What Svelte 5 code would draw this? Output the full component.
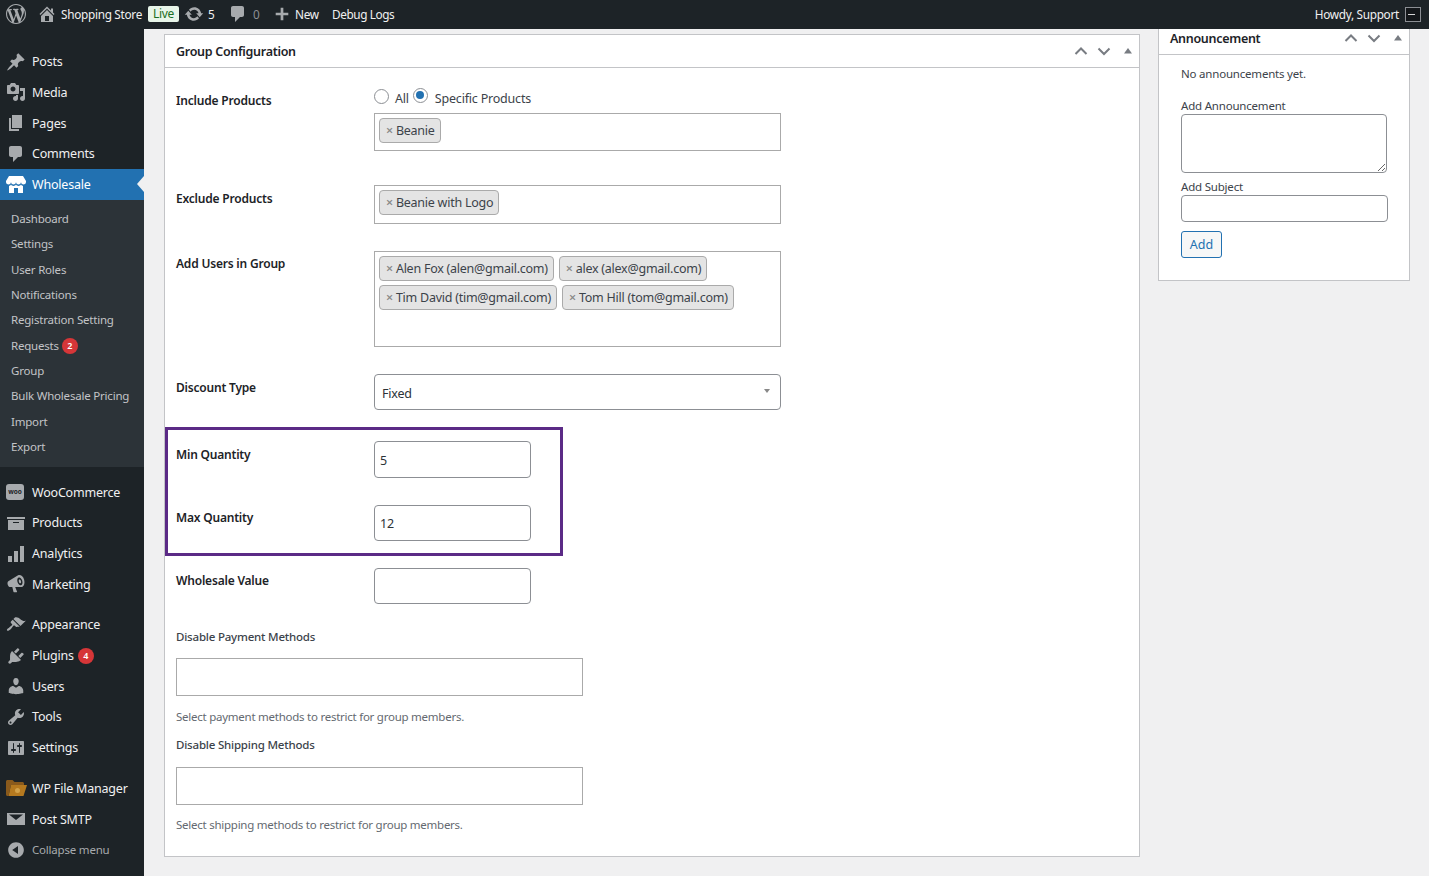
<script>
	const icons = {
		posts: 'M10.44 3.02l1.82-1.82 6.36 6.35-1.83 1.82c-1.05-.68-2.48-.57-3.41.36l-.75.75c-.92.93-1.04 2.35-.35 3.41l-1.83 1.82-2.41-2.41-2.8 2.79c-.42.42-3.38 2.71-3.8 2.29s1.86-3.39 2.28-3.81l2.79-2.79L4.1 9.36l1.83-1.82c1.05.69 2.48.57 3.4-.36l.75-.75c.93-.92 1.05-2.35.36-3.41z',
		media: 'M13 11V4c0-.55-.45-1-1-1h-1.67L9 1H5L3.67 3H2c-.55 0-1 .45-1 1v7c0 .55.45 1 1 1h10c.55 0 1-.45 1-1zM7 4.5c1.38 0 2.5 1.12 2.5 2.5S8.38 9.5 7 9.5 4.5 8.38 4.5 7 5.62 4.5 7 4.5zM14 6h5v10.5c0 1.38-1.12 2.5-2.5 2.5S14 17.88 14 16.5s1.12-2.5 2.5-2.5c.17 0 .34.02.5.05V9h-3V6zm-4 8.05V13h2v3.5c0 1.38-1.12 2.5-2.5 2.5S7 17.88 7 16.5 8.12 14 9.5 14c.17 0 .34.02.5.05z',
		pages: 'M6 15V2h10v13H6zm-1 1h8v2H3V5h2v11z',
		comments: 'M5 2h9c1.1 0 2 .9 2 2v7c0 1.1-.9 2-2 2h-2l-5 5v-5H5c-1.1 0-2-.9-2-2V4c0-1.1.9-2 2-2z',
		store: 'M1 10c.41.29.96.43 1.5.43.55 0 1.09-.14 1.5-.43.62-.46 1-1.17 1-2 0 .83.37 1.54 1 2 .41.29.96.43 1.5.43.55 0 1.09-.14 1.5-.43.62-.46 1-1.17 1-2 0 .83.37 1.54 1 2 .41.29.96.43 1.51.43.54 0 1.08-.14 1.49-.43.62-.46 1-1.17 1-2 0 .83.37 1.54 1 2 .41.29.96.43 1.5.43.55 0 1.09-.14 1.5-.43.63-.46 1-1.17 1-2V7l-3-5H3L0 7v1c0 .83.37 1.54 1 2zm2 8.99h5v-5h4v5h5v-7c-.37-.05-.72-.22-1-.43-.63-.45-1-.73-1-1.56 0 .83-.38 1.11-1 1.56-.41.3-.95.43-1.49.44-.55 0-1.1-.14-1.51-.44-.63-.45-1-.73-1-1.56 0 .83-.38 1.11-1 1.56-.41.3-.95.43-1.5.44-.54 0-1.09-.14-1.5-.44-.63-.45-1-.73-1-1.57 0 .84-.38 1.12-1 1.57-.29.21-.63.38-1 .44v6.99z',
		products: 'M19 4v2H1V4h18zM2 7h16v10H2V7zm11 3V9H7v1h6z',
		analytics: 'M18 18V2h-4v16h4zm-6 0V7H8v11h4zm-6 0v-6H2v6h4z',
		marketing: 'M18.15 5.94c.46 1.62.38 3.22-.02 4.48-.42 1.28-1.26 2.18-2.3 2.48-.16.06-.26.06-.4.06-.12.02-.26.04-.4.04H9.2l1.9 4.7c.06.3-.2.5-.48.5H7.95c-.26 0-.44-.2-.5-.44L6.3 13H4.25c-.5.06-1.08-.18-1.54-.62s-.88-1.08-1.06-1.88c-.24-.8-.2-1.56-.02-2.2.18-.62.58-1.08 1.06-1.3l9-5.42c.3-.2.62-.36.98-.46 1.04-.3 2.24.1 3.28.95 1.06.88 1.76 2.08 2.2 3.64zM15 11.2c1.35-.4 1.85-2.4 1.25-4.5s-2.2-3.5-3.5-3.1-1.85 2.4-1.25 4.5 2.2 3.5 3.5 3.1zm-.5-1.9c-.6.17-1.3-.55-1.6-1.6s-.1-2.05.5-2.2 1.3.55 1.6 1.6.1 2.03-.5 2.2z',
		appearance: 'M14.48 11.06L7.41 3.99l1.5-1.5c.5-.56 2.3-.47 3.51.32 1.21.8 1.43 1.28 2.91 2.1 1.18.64 2.45 1.26 4.45.85zm-.71.71L6.7 4.7 4.93 6.47c-.39.39-.39 1.02 0 1.41l1.06 1.06c.39.39.39 1.03 0 1.42-.6.6-1.43 1.11-2.21 1.69-.35.26-.7.53-1.01.84C1.43 13.23.4 14.85 1.1 15.6c.69.76 2.36-.25 3.78-1.66.3-.3.57-.66.83-1.01.58-.78 1.09-1.61 1.69-2.21.39-.39 1.02-.39 1.41 0l1.06 1.06c.39.39 1.03.39 1.42 0z',
		plugins: 'M13.11 4.36L9.87 7.6 8 5.73l3.24-3.24c.35-.34 1.05-.2 1.56.32.52.51.66 1.21.31 1.55zm-8 1.77l.91-1.12 9.01 9.01-1.19.84c-.71.71-2.63 1.16-3.82 1.16H6.14L4.9 17.26c-.59.59-1.54.59-2.12 0-.59-.58-.59-1.53 0-2.12l1.24-1.24v-3.88c0-1.13.4-3.19 1.09-3.89zm7.26 3.97l3.24-3.24c.34-.35 1.04-.21 1.55.31.52.51.66 1.21.31 1.55l-3.24 3.25z',
		users: 'M10 9.25c-2.27 0-2.73-3.44-2.73-3.44C7 4.02 7.82 2 9.97 2c2.16 0 2.98 2.02 2.71 3.81 0 0-.41 3.44-2.68 3.44zm0 2.57L12.72 10c2.39 0 4.52 2.33 4.52 4.53v2.49s-3.65 1.13-7.24 1.13c-3.65 0-7.24-1.13-7.24-1.13v-2.49c0-2.25 1.94-4.48 4.47-4.48z',
		tools: 'M16.68 9.77c-1.34 1.34-3.3 1.67-4.95.99l-5.41 6.52c-.99.99-2.59.99-3.58 0s-.99-2.59 0-3.57l6.52-5.42c-.68-1.65-.35-3.61.99-4.95 1.28-1.28 3.12-1.62 4.72-1.06l-2.89 2.89 2.82 2.82 2.86-2.87c.53 1.58.18 3.39-1.08 4.65zM3.81 16.21c.4.39 1.04.39 1.43 0 .4-.4.4-1.04 0-1.43-.39-.4-1.03-.4-1.43 0-.39.39-.39 1.03 0 1.43z',
		settings: 'M18 16V4c0-.55-.45-1-1-1H3c-.55 0-1 .45-1 1v12c0 .55.45 1 1 1h14c.55 0 1-.45 1-1zM8 11h1c.55 0 1 .45 1 1s-.45 1-1 1H8v1.5c0 .28-.22.5-.5.5s-.5-.22-.5-.5V13H6c-.55 0-1-.45-1-1s.45-1 1-1h1V5.5c0-.28.22-.5.5-.5s.5.22.5.5V11zm5-2h-1c-.55 0-1-.45-1-1s.45-1 1-1h1V5.5c0-.28.22-.5.5-.5s.5.22.5.5V7h1c.55 0 1 .45 1 1s-.45 1-1 1h-1v5.5c0 .28-.22.5-.5.5s-.5-.22-.5-.5V9z',
		smtp: 'M1 4h18v12H1V4zm2 1.6l7 5.4 7-5.4v-.1H3v.1z',
		collapse: 'M10 2.16c4.33 0 7.84 3.51 7.84 7.84s-3.51 7.84-7.84 7.84S2.16 14.33 2.16 10 5.71 2.16 10 2.16zm2 11.72V6.12L6.18 9.97z',
		wp: 'M20 10c0-5.51-4.49-10-10-10C4.48 0 0 4.49 0 10c0 5.52 4.48 10 10 10 5.51 0 10-4.48 10-10zM7.78 15.37L4.37 6.22c.55-.02 1.17-.08 1.17-.08.5-.06.44-1.13-.06-1.11 0 0-1.45.11-2.37.11-.18 0-.37 0-.58-.01C4.12 2.69 6.89 1.05 10 1.05c2.32 0 4.43.88 6.02 2.37-.68-.11-1.65.39-1.65 1.58 0 .74.45 1.36.9 2.1.35.61.55 1.36.55 2.46 0 1.49-1.4 5-1.4 5l-3.03-8.37c.54-.02.82-.17.82-.17.5-.05.44-1.25-.06-1.22 0 0-1.44.12-2.38.12-.87 0-2.33-.12-2.33-.12-.5-.03-.56 1.2-.06 1.22l.92.08 1.26 3.41zM17.41 10c.24-.64.74-1.87.43-4.25.7 1.29 1.05 2.71 1.05 4.25 0 3.29-1.73 6.24-4.48 7.78.999-2.67 2-5.36 3-7.78zM6.1 18.09C3.12 16.65 1.06 13.53 1.06 10c0-1.3.23-2.48.72-3.58C3.2 10.3 4.65 14.19 6.1 18.09zm4.03-6.63l2.58 6.98c-.86.29-1.74.45-2.71.45-.79 0-1.57-.11-2.29-.33.81-2.38 1.62-4.72 2.42-7.1z',
		home: 'M16 8.5l1.53 1.53-1.06 1.06L10 4.62l-6.47 6.47-1.06-1.06L10 2.5l4 4v-2h2v4zm-6-2.46l6 5.99V18H4v-5.97zM12 17v-5H8v5h4z',
		update: 'M10.2 3.28c3.53 0 6.43 2.61 6.92 6h2.08l-3.5 4-3.5-4h2.32c-.45-1.97-2.21-3.44-4.32-3.44-1.45 0-2.73.71-3.54 1.79L4.95 5.65c1.28-1.45 3.15-2.37 5.25-2.37zm-.4 13.44c-3.52 0-6.43-2.61-6.92-6H.8l3.5-4c1.17 1.33 2.33 2.67 3.5 4H5.48c.45 1.97 2.21 3.44 4.32 3.44 1.45 0 2.73-.71 3.54-1.79l1.71 1.95c-1.28 1.45-3.15 2.4-5.25 2.4z',
		plus: 'M17 8.5v3h-5.5V17h-3v-5.5H3v-3h5.5V3h3v5.5H17z'
	};

	const topItems = [
		{ label: 'Posts', icon: 'posts' },
		{ label: 'Media', icon: 'media' },
		{ label: 'Pages', icon: 'pages' },
		{ label: 'Comments', icon: 'comments' }
	];
	const subItems = [
		{ label: 'Dashboard' },
		{ label: 'Settings' },
		{ label: 'User Roles' },
		{ label: 'Notifications' },
		{ label: 'Registration Setting' },
		{ label: 'Requests', badge: 2 },
		{ label: 'Group' },
		{ label: 'Bulk Wholesale Pricing' },
		{ label: 'Import' },
		{ label: 'Export' }
	];
	const wooItems = [
		{ label: 'WooCommerce', icon: 'woo' },
		{ label: 'Products', icon: 'products' },
		{ label: 'Analytics', icon: 'analytics' },
		{ label: 'Marketing', icon: 'marketing' }
	];
	const adminItems = [
		{ label: 'Appearance', icon: 'appearance' },
		{ label: 'Plugins', icon: 'plugins', badge: 4 },
		{ label: 'Users', icon: 'users' },
		{ label: 'Tools', icon: 'tools' },
		{ label: 'Settings', icon: 'settings' }
	];
	const extraItems = [
		{ label: 'WP File Manager', icon: 'folder' },
		{ label: 'Post SMTP', icon: 'smtp' }
	];
	const userChips = [
		['Alen Fox (alen@gmail.com)', 'alex (alex@gmail.com)'],
		['Tim David (tim@gmail.com)', 'Tom Hill (tom@gmail.com)']
	];
</script>

{#snippet menuItem(item)}
	<li class="menu-item">
		<span class="menu-icon">
			{#if item.icon === 'woo'}
				<span class="woo-icon">woo</span>
			{:else if item.icon === 'folder'}
				<svg width="21" height="16" viewBox="0 0 21 16">
					<path d="M0 1.5C0 .7.7 0 1.5 0h5l2 2h8c.8 0 1.5.7 1.5 1.5V5H5L2.5 16h-1C.7 16 0 15.300 0 14.500z" fill="#8a5a1c" />
					<path d="M5 5h16l-3.5 11h-15z" fill="#b5791f" />
					<circle cx="11.5" cy="10.5" r="2.5" fill="#d3a24a" />
				</svg>
			{:else}
				<svg width="20" height="20" viewBox="0 0 20 20"><path d={icons[item.icon]} /></svg>
			{/if}
		</span>
		<span>{item.label}</span>
		{#if item.badge}<span class="badge">{item.badge}</span>{/if}
	</li>
{/snippet}

{#snippet chip(text)}
	<span class="chip"><span class="chip-x">×</span>{text}</span>
{/snippet}

{#snippet handles()}
	<div class="handles">
		<svg width="14" height="14" viewBox="0 0 14 14"><path d="M1.5 10L7 4.5 12.5 10" /></svg>
		<svg width="14" height="14" viewBox="0 0 14 14"><path d="M1.5 4.5L7 10l5.5-5.5" /></svg>
		<svg class="tri" width="10" height="14" viewBox="0 0 10 14"><path d="M1 9.5L5 4l4 5.5z" /></svg>
	</div>
{/snippet}

<div class="page">
	<header class="adminbar">
		<svg class="bar-wp" width="20" height="20" viewBox="0 0 20 20"><path d={icons.wp} /></svg>
		<svg class="bar-home" width="20" height="20" viewBox="0 0 20 20"><path d={icons.home} /></svg>
		<span class="bar-site">Shopping Store</span>
		<span class="live">Live</span>
		<svg class="bar-update" width="20" height="20" viewBox="0 0 20 20"><path d={icons.update} /></svg>
		<span class="bar-count">5</span>
		<svg class="bar-comment" width="20" height="20" viewBox="0 0 20 20"><path d={icons.comments} /></svg>
		<span class="bar-count dim">0</span>
		<svg class="bar-plus" width="18" height="18" viewBox="0 0 20 20"><path d={icons.plus} /></svg>
		<span class="bar-new">New</span>
		<span class="bar-debug">Debug Logs</span>
		<span class="bar-howdy">Howdy, Support</span>
		<span class="avatar"><span></span></span>
	</header>

	<div class="layout">
		<nav class="sidebar">
			<ul class="menu-group first">
				{#each topItems as item}{@render menuItem(item)}{/each}
				<li class="menu-item current">
					<span class="menu-icon"><svg width="20" height="20" viewBox="0 0 20 20"><path d={icons.store} /></svg></span>
					<span>Wholesale</span>
				</li>
			</ul>
			<ul class="submenu">
				{#each subItems as sub}
					<li>{sub.label}{#if sub.badge}<span class="badge sub">{sub.badge}</span>{/if}</li>
				{/each}
			</ul>
			<ul class="menu-group">
				{#each wooItems as item}{@render menuItem(item)}{/each}
			</ul>
			<ul class="menu-group">
				{#each adminItems as item}{@render menuItem(item)}{/each}
			</ul>
			<ul class="menu-group">
				{#each extraItems as item}{@render menuItem(item)}{/each}
				<li class="menu-item collapse">
					<span class="menu-icon"><svg width="20" height="20" viewBox="0 0 20 20"><path d={icons.collapse} /></svg></span>
					<span>Collapse menu</span>
				</li>
			</ul>
		</nav>

		<main class="content">
			<section class="card config">
				<div class="card-head">
					<h2>Group Configuration</h2>
					{@render handles()}
				</div>
				<div class="card-body">
					<div class="row include">
						<span class="label tight">Include Products</span>
						<div>
							<div class="radios">
								<input class="radio low" type="radio" name="scope" />
								<span class="radio-text">All</span>
								<input class="radio" type="radio" name="scope" checked />
								<span class="radio-text gap">Specific Products</span>
							</div>
							<div class="select2 h38">{@render chip('Beanie')}</div>
						</div>
					</div>

					<div class="row exclude">
						<span class="label">Exclude Products</span>
						<div class="select2 h39">{@render chip('Beanie with Logo')}</div>
					</div>

					<div class="row add-users">
						<span class="label tight">Add Users in Group</span>
						<div class="select2 h96">
							{#each userChips as line}
								<div class="chip-line">
									{#each line as text}{@render chip(text)}{/each}
								</div>
							{/each}
						</div>
					</div>

					<div class="row discount">
						<span class="label">Discount Type</span>
						<div class="select-wrap">
							<select class="field wide">
								<option>Fixed</option>
							</select>
						</div>
					</div>

					<div class="qty-box">
						<div class="row">
							<span class="label">Min Quantity</span>
							<input class="field short" value="5" />
						</div>
						<div class="row max">
							<span class="label tight">Max Quantity</span>
							<input class="field short max-input" value="12" />
						</div>
					</div>

					<div class="row wholesale">
						<span class="label tight">Wholesale Value</span>
						<input class="field short" />
					</div>

					<div class="label plain first-plain">Disable Payment Methods</div>
					<div class="select2 block"></div>
					<p class="help">Select payment methods to restrict for group members.</p>

					<div class="label plain second-plain">Disable Shipping Methods</div>
					<div class="select2 block second"></div>
					<p class="help last">Select shipping methods to restrict for group members.</p>
				</div>
			</section>

			<aside class="card side">
				<div class="card-head small">
					<h2>Announcement</h2>
					{@render handles()}
				</div>
				<div class="side-body">
					<p class="none">No announcements yet.</p>
					<label class="side-label" for="ann">Add Announcement</label>
					<textarea id="ann" class="field area"></textarea>
					<label class="side-label subject" for="subj">Add Subject</label>
					<input id="subj" class="field subject-input" />
					<button class="add">Add</button>
				</div>
			</aside>
		</main>
	</div>
</div>

<style>
	:global(body) {
		margin: 0;
		background: #f0f0f1;
		font-family: "Noto Sans", "Open Sans", sans-serif;
		font-size: 12.5px;
		letter-spacing: -0.2px;
		color: #3c434a;
		overflow: hidden;
	}

	.page {
		height: 876px;
		display: flex;
		flex-direction: column;
		overflow: hidden;
	}

	/* admin bar */
	.adminbar {
		height: 29px;
		flex-shrink: 0;
		background: #1d2327;
		color: #f0f0f1;
		display: flex;
		align-items: center;
		font-size: 11.8px;
		letter-spacing: -0.3px;
		white-space: nowrap;
		padding-bottom: 1px;
		box-sizing: border-box;
	}

	.adminbar svg {
		fill: #a7aaad;
		flex-shrink: 0;
	}

	.bar-wp { margin-left: 6px; }
	.bar-home { margin-left: 11px; }
	.bar-site { margin-left: 4px; width: 82px; }
	.live {
		margin-left: 5px;
		height: 16px;
		width: 31px;
		text-align: center;
		line-height: 15px;
		background: #e8f5e9;
		color: #1b6e23;
		border-radius: 2px;
		font-size: 12px;
	}
	.bar-update { margin-left: 5px; }
	.bar-count { margin-left: 4px; width: 8px; }
	.bar-count.dim { color: #8c8f94; margin-left: 5px; }
	.bar-comment { margin-left: 12px; }
	.bar-plus { margin-left: 12px; }
	.bar-new { margin-left: 4px; width: 26px; }
	.bar-debug { margin-left: 11px; letter-spacing: -0.4px; }
	.bar-howdy { margin-left: auto; }
	.avatar {
		width: 16px;
		height: 15px;
		margin: 0 8px 0 6px;
		border: 1px solid #8c8f94;
		background: #14171a;
		display: flex;
		align-items: center;
		padding-left: 2px;
		box-sizing: border-box;
	}
	.avatar span {
		width: 7px;
		height: 1px;
		background: #d5d5d5;
	}

	.layout {
		flex: 1;
		display: flex;
		min-height: 0;
	}

	/* sidebar */
	.sidebar {
		width: 144px;
		flex-shrink: 0;
		background: #1d2327;
		color: #f0f0f1;
	}

	ul {
		list-style: none;
		margin: 0;
		padding: 0;
	}

	.menu-group {
		margin-top: 10px;
	}

	.menu-group.first {
		margin-top: 17.3px;
	}

	.menu-item {
		height: 30.7px;
		display: flex;
		align-items: center;
		white-space: nowrap;
		position: relative;
	}

	.menu-icon {
		width: 32px;
		flex-shrink: 0;
		display: flex;
		justify-content: flex-start;
		padding-left: 6px;
		box-sizing: border-box;
	}

	.menu-icon svg {
		fill: #a7aaad;
		display: block;
	}

	.menu-item.current {
		background: #2271b1;
		color: #fff;
	}

	.menu-item.current svg {
		fill: #fff;
	}

	.menu-item.current::after {
		content: "";
		position: absolute;
		right: 0;
		top: 50%;
		margin-top: -8px;
		border: 8px solid transparent;
		border-right-color: #f0f0f1;
		border-left-width: 0;
		border-right-width: 7px;
	}

	.menu-item.collapse {
		color: #a7aaad;
		font-size: 11.5px;
	}

	.woo-icon {
		width: 18px;
		height: 16px;
		border-radius: 3px;
		background: #a7aaad;
		color: #1d2327;
		font-size: 6.5px;
		font-weight: 700;
		line-height: 15px;
		text-align: center;
		letter-spacing: 0;
	}

	.submenu {
		background: #2c3338;
		padding: 6px 0 7.2px;
		font-size: 11.5px;
		color: #c3c4c7;
	}

	.submenu li {
		height: 25.4px;
		line-height: 25.4px;
		padding-left: 11px;
		white-space: nowrap;
	}

	.badge {
		display: inline-block;
		width: 16px;
		height: 16px;
		line-height: 16px;
		border-radius: 50%;
		background: #d63638;
		color: #fff;
		font-size: 9px;
		font-weight: 600;
		text-align: center;
		margin-left: 4px;
		vertical-align: 1px;
		letter-spacing: 0;
	}

	.badge.sub {
		margin-left: 3px;
	}

	/* main area */
	.content {
		flex: 1;
		display: flex;
		align-items: flex-start;
		gap: 18px;
		padding: 0 19px 0 20px;
		min-width: 0;
	}

	.card {
		background: #fff;
		border: 1px solid #c3c4c7;
		box-sizing: border-box;
	}

	.config {
		width: 976px;
		height: 823px;
		margin-top: 5px;
	}

	.side {
		width: 252px;
		height: 252px;
		border-top: 0;
	}

	.card-head {
		height: 32px;
		display: flex;
		align-items: center;
		justify-content: space-between;
		padding: 0 6px 0 11px;
		border-bottom: 1px solid #c3c4c7;
	}

	.card-head.small {
		height: 26px;
		padding-bottom: 7px;
		box-sizing: border-box;
	}

	h2 {
		margin: 0;
		font-size: 12.5px;
		font-weight: 600;
		letter-spacing: -0.3px;
		color: #1d2327;
	}

	.handles {
		display: flex;
		align-items: center;
		gap: 9px;
	}

	.handles svg {
		fill: none;
		stroke: #787c82;
		stroke-width: 2;
	}

	.handles .tri {
		fill: #787c82;
		stroke: none;
		margin-left: 3px;
	}

	.card-body {
		padding: 20px 11px 0;
	}

	.row {
		display: grid;
		grid-template-columns: 198px 1fr;
		align-items: start;
	}

	.label {
		padding-top: 5px;
		line-height: 18px;
		color: #1d2327;
		font-weight: 600;
		font-size: 12px;
	}

	.label.tight {
		padding-top: 4px;
	}

	.radios {
		height: 18px;
		margin-bottom: 7px;
		display: flex;
		align-items: center;
	}

	.radio {
		appearance: none;
		width: 15px;
		height: 15px;
		margin: 0;
		border: 1px solid #8c8f94;
		border-radius: 50%;
		background: #fff;
		box-sizing: border-box;
		position: relative;
		top: -2px;
	}

	.radio.low {
		top: -1px;
	}

	.radio:checked::before {
		content: "";
		position: absolute;
		inset: 2.5px;
		border-radius: 50%;
		background: #2271b1;
	}

	.radio-text {
		margin: 0 4px 0 6px;
		position: relative;
		top: 1px;
	}

	.radio-text.gap {
		margin-left: 7px;
	}

	.select2 {
		width: 407px;
		box-sizing: border-box;
		border: 1px solid #aaa;
		background: #fff;
		padding: 4px;
	}

	.h38 { height: 38px; }
	.h39 { height: 39px; }
	.h96 { height: 96px; }

	.chip {
		display: inline-block;
		height: 25px;
		line-height: 23px;
		box-sizing: border-box;
		background: #e4e4e4;
		border: 1px solid #aaa;
		border-radius: 4px;
		padding: 0 5px 0 6px;
		white-space: nowrap;
		letter-spacing: -0.25px;
	}

	.chip-x {
		color: #888;
		margin-right: 3px;
		font-weight: 600;
	}

	.chip-line {
		display: flex;
		gap: 5px;
		margin-bottom: 4px;
	}

	.exclude { margin-top: 34px; }
	.add-users { margin-top: 27px; }
	.discount { margin-top: 27px; }

	.field {
		box-sizing: border-box;
		border: 1px solid #8c8f94;
		border-radius: 4px;
		background: #fff;
		font-family: inherit;
		font-size: 12.5px;
		letter-spacing: -0.2px;
		color: #2c3338;
		padding: 0 5px;
		margin: 0;
		display: block;
		outline: none;
	}

	.wide {
		width: 407px;
		height: 36px;
		appearance: none;
		padding: 2px 7px 0;
	}

	.select-wrap {
		position: relative;
		width: 407px;
	}

	.select-wrap::after {
		content: "";
		position: absolute;
		right: 11px;
		top: 15px;
		border: 4px solid transparent;
		border-top: 4px solid #888;
		border-bottom: 0;
		border-left-width: 3px;
		border-right-width: 3px;
	}

	.short {
		width: 157px;
		height: 37px;
		padding-top: 2px;
	}

	.max-input {
		height: 36px;
		padding-top: 1px;
	}

	.qty-box {
		width: 398px;
		height: 129px;
		box-sizing: border-box;
		margin: 17px 0 0 -11px;
		padding: 11px 0 0 8px;
		border: 3px solid #5b2a86;
	}

	.qty-box .row {
		grid-template-columns: 198px 157px;
	}

	.qty-box .max {
		margin-top: 27px;
	}

	.wholesale {
		margin-top: 12px;
	}

	.wholesale .short {
		height: 36px;
	}

	.plain {
		padding-top: 0;
		font-size: 11.5px;
		font-weight: 500;
		color: #3c434a;
	}

	.first-plain { margin-top: 24px; }
	.second-plain { margin-top: 10px; }

	.block {
		height: 38px;
		margin-top: 12px;
	}

	.block.second {
		margin-top: 13px;
	}

	.help {
		margin: 12px 0 0;
		line-height: 18px;
		font-size: 11.5px;
		letter-spacing: -0.25px;
		color: #646970;
	}

	.help.last {
		margin-top: 11px;
	}

	/* announcement */
	.side-body {
		padding: 10px 0 0 22px;
		font-size: 11.5px;
	}

	.none {
		margin: 0;
		line-height: 18px;
	}

	.side-label {
		display: block;
		margin-top: 14px;
		line-height: 17px;
	}

	.side-label.subject {
		margin-top: 5px;
		line-height: 17px;
	}

	.area {
		width: 206px;
		height: 59px;
	}

	.subject-input {
		width: 207px;
		height: 27px;
	}

	.add {
		display: block;
		margin-top: 9px;
		width: 41px;
		height: 27px;
		padding: 0;
		background: #f6f7f7;
		border: 1px solid #2271b1;
		border-radius: 3px;
		color: #2271b1;
		font-family: inherit;
		font-size: 12.5px;
	}
</style>
